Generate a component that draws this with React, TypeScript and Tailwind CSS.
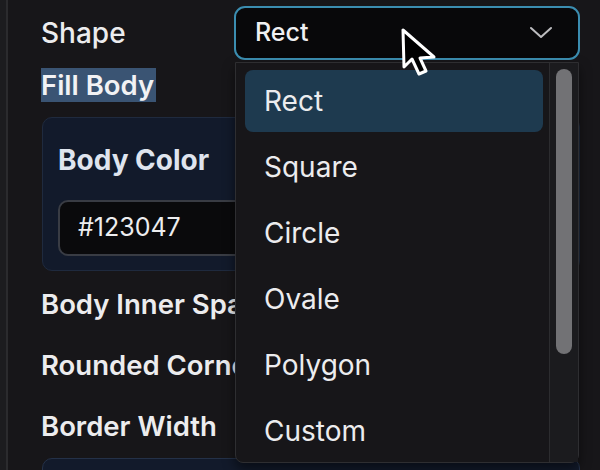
import React from 'react';

const SHAPES = ['Rect', 'Square', 'Circle', 'Ovale', 'Polygon', 'Custom'];

const Chevron: React.FC = () => (
  <svg width="22" height="14" viewBox="0 0 22 14" fill="none">
    <polyline points="1,2 11,11 21,2" stroke="#bdbdc0" strokeWidth="2" strokeLinecap="round" strokeLinejoin="round" />
  </svg>
);

const Cursor: React.FC = () => (
  <svg width="40" height="52" viewBox="0 0 40 52" className="absolute left-[400px] top-[27px]">
    <path
      d="M3 3 L4 40 L12 32 L19 47 L26 44 L20 31 L34 30 Z"
      fill="#000"
      stroke="#fff"
      strokeWidth="3"
      strokeLinejoin="round"
    />
  </svg>
);

// labels run on under the open list, which covers them
const Label: React.FC<{ children: React.ReactNode }> = ({ children }) => (
  <div className="h-[61px] flex items-center text-[27.5px] font-semibold text-[#ececee] whitespace-nowrap">{children}</div>
);

export default function App() {
  const selected = 'Rect';

  return (
    <div className="relative w-[600px] h-[470px] overflow-hidden bg-[#171619] flex font-['Inter',sans-serif] select-none">
      {/* sidebar edge */}
      <div className="w-[8px] shrink-0 bg-[#1c1c1f] border-r-2 border-[#2b2b2e]" />

      <div className="flex-1 pl-[33px] pr-[20px] pt-[6px]">
        {/* Shape */}
        <div className="flex items-center h-[54px]">
          <div className="w-[193px] text-[28px] font-medium text-[#ececee]">Shape</div>
          <button className="w-[346px] h-[54px] rounded-[11px] border-2 border-[#3b8db0] bg-[#08080a] flex items-center justify-between pl-[19px] pr-[26px] text-[25px] font-medium text-[#f0f0f2]">
            <span>Rect</span>
            <Chevron />
          </button>
        </div>

        {/* Fill Body */}
        <div className="h-[50px] flex items-center">
          <span className="bg-[#3a5473] text-[27.5px] font-semibold text-[#f2f2f4] leading-[34px] pr-[2px]">Fill Body</span>
        </div>

        {/* Body Color panel */}
        <div className="mt-[7px] ml-[1px] h-[154px] rounded-[10px] border border-[#1f2a3e] bg-[#121a2b] pl-[15px] pt-[22px]">
          <div className="text-[28px] font-bold text-[#dfe4ee] leading-[40px]">Body Color</div>
          <div className="mt-[20px] h-[56px] rounded-[10px] border-2 border-[#393c44] bg-[#0a0a0c] flex items-center pl-[18px] text-[25px] text-[#ededef]">
            #123047
          </div>
        </div>

        <div className="mt-[3px]">
          <Label>Body Inner Spacing</Label>
          <Label>Rounded Corners</Label>
          <Label>Border Width</Label>
        </div>

        {/* next panel peeking */}
        <div className="mt-[1px] ml-[1px] h-[40px] rounded-t-[10px] border border-[#243148] bg-[#121a2b]" />
      </div>

      {/* dropdown list */}
      <div className="absolute left-[235px] top-[62px] w-[344px] h-[401px] rounded-b-[8px] border border-[#2e2e31] bg-[#171619] shadow-[0_6px_12px_rgba(0,0,0,0.5)] flex">
        <div className="flex-1 flex flex-col gap-[4px] pt-[7px] pl-[9px] pr-[6px]">
          {SHAPES.map((s) => (
            <div
              key={s}
              className={`h-[62px] shrink-0 rounded-[8px] flex items-center pl-[19px] text-[28px] text-[#ececee] ${
                s === selected ? 'bg-[#1e3a4f]' : ''
              }`}
            >
              {s}
            </div>
          ))}
        </div>
        <div className="w-[29px] shrink-0 border-l border-[#2c2c2f] bg-[#1b1b1e] pt-[6px] flex justify-center">
          <div className="w-[16px] h-[285px] rounded-full bg-[#727275]" />
        </div>
      </div>

      <Cursor />
    </div>
  );
}
